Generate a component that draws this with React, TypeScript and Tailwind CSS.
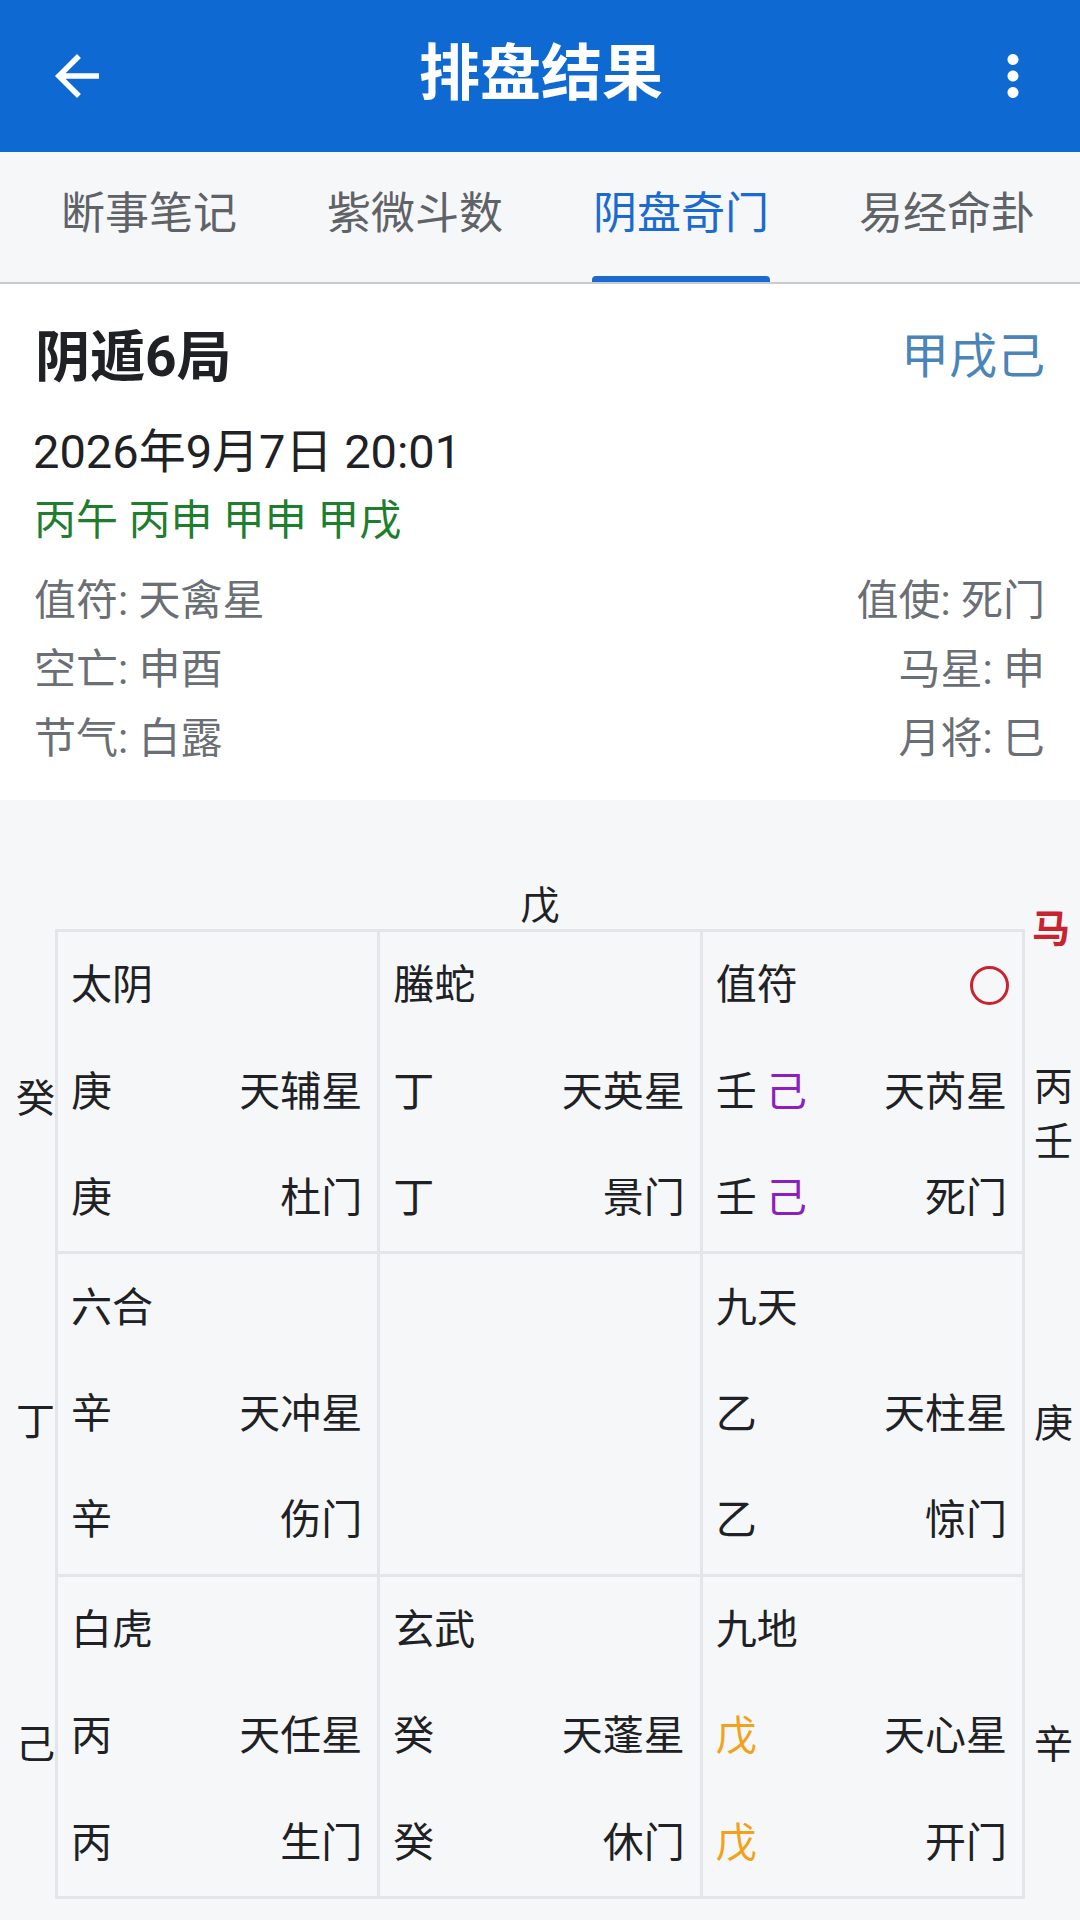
import React from "react";

const tabs = ["断事笔记", "紫微斗数", "阴盘奇门", "易经命卦"];

type Cell = {
  god?: string;
  circle?: boolean;
  rows?: { l: React.ReactNode; r: string }[];
};

const Purple = ({ c }: { c: string }) => <span className="text-[#8e1fbf] ml-[9px]">{c}</span>;
const Orange = ({ c }: { c: string }) => <span className="text-[#f2a21a]">{c}</span>;

const cells: Cell[] = [
  { god: "太阴", rows: [{ l: "庚", r: "天辅星" }, { l: "庚", r: "杜门" }] },
  { god: "螣蛇", rows: [{ l: "丁", r: "天英星" }, { l: "丁", r: "景门" }] },
  {
    god: "值符",
    circle: true,
    rows: [
      { l: <>壬<Purple c="己" /></>, r: "天芮星" },
      { l: <>壬<Purple c="己" /></>, r: "死门" },
    ],
  },
  { god: "六合", rows: [{ l: "辛", r: "天冲星" }, { l: "辛", r: "伤门" }] },
  {},
  { god: "九天", rows: [{ l: "乙", r: "天柱星" }, { l: "乙", r: "惊门" }] },
  { god: "白虎", rows: [{ l: "丙", r: "天任星" }, { l: "丙", r: "生门" }] },
  { god: "玄武", rows: [{ l: "癸", r: "天蓬星" }, { l: "癸", r: "休门" }] },
  { god: "九地", rows: [{ l: <Orange c="戊" />, r: "天心星" }, { l: <Orange c="戊" />, r: "开门" }] },
];

function GridCell({ cell }: { cell: Cell }) {
  if (!cell.god) return <div className="bg-[#f6f7f9]" />;
  return (
    <div className="bg-[#f6f7f9] flex flex-col pl-[13px] pr-[15px] text-[41px] leading-[50px] text-[#202124]">
      <div className="flex-1 flex items-center justify-between">
        <span>{cell.god}</span>
        {cell.circle && (
          <div className="w-[39px] h-[39px] rounded-full border-[3px] border-[#c8232f] mr-[-2px]" />
        )}
      </div>
      {cell.rows!.map((r, i) => (
        <div key={i} className="flex-1 flex items-center justify-between">
          <span>{r.l}</span>
          <span>{r.r}</span>
        </div>
      ))}
    </div>
  );
}

export default function App() {
  return (
    <div className="w-[1080px] h-[1920px] overflow-hidden bg-[#f6f7f9] font-[Roboto,'Noto_Sans_CJK_SC',sans-serif]">
      {/* App bar */}
      <div className="h-[152px] bg-[#0f69d3] flex items-center">
        <div className="flex-1 flex items-center pl-[44px]">
          <svg width="66" height="66" viewBox="0 0 24 24" fill="#ffffff">
            <path d="M20 11H7.83l5.59-5.59L12 4l-8 8 8 8 1.41-1.41L7.83 13H20v-2z" />
          </svg>
        </div>
        <div className="text-white text-[61px] font-bold leading-[70px] mb-[4px] mr-[8px]">排盘结果</div>
        <div className="flex-1 flex items-center justify-end pr-[34px]">
          <svg width="66" height="66" viewBox="0 0 24 24" fill="#ffffff">
            <path d="M12 8c1.1 0 2-.9 2-2s-.9-2-2-2-2 .9-2 2 .9 2 2 2zm0 2c-1.1 0-2 .9-2 2s.9 2 2 2 2-.9 2-2-.9-2-2-2zm0 6c-1.1 0-2 .9-2 2s.9 2 2 2 2-.9 2-2-.9-2-2-2z" />
          </svg>
        </div>
      </div>

      {/* Tabs */}
      <div className="bg-[#f6f7f9]">
        <div className="flex h-[130px] pl-[16px]">
          {tabs.map((t, i) => (
            <div key={t} className="w-[267px] flex flex-col items-center">
              <div
                className={`flex-1 flex items-center text-[44px] leading-[50px] ${
                  i === 2 ? "text-[#1a6ad2]" : "text-[#5f6368]"
                }`}
              >
                {t}
              </div>
              <div className={`h-[6px] w-[178px] rounded-t-[4px] ${i === 2 ? "bg-[#1a6ad2]" : ""}`} />
            </div>
          ))}
        </div>
        <div className="h-[2px] bg-[#c9cbcf]" />
      </div>

      {/* Info card */}
      <div className="bg-white pl-[35px] pr-[35px] pt-[43px] pb-[27px]">
        <div className="flex items-center justify-between h-[60px]">
          <div className="text-[55px] font-bold text-[#202124] leading-[60px]">阴遁6局</div>
          <div className="text-[48px] text-[#4a84b8] leading-[60px]">甲戌己</div>
        </div>
        <div className="mt-[38px] text-[47px] leading-[54px] text-[#202124] ml-[-2px]">2026年9月7日 20:01</div>
        <div className="mt-[17px] text-[42px] leading-[50px] text-[#1f7e2e] ml-[-1px]">丙午 丙申 甲申 甲戌</div>
        <div className="mt-[20px] text-[42px] text-[#6a6f75]">
          {[
            ["值符: 天禽星", "值使: 死门"],
            ["空亡: 申酉", "马星: 申"],
            ["节气: 白露", "月将: 巳"],
          ].map(([a, b]) => (
            <div key={a} className="h-[69px] flex items-center justify-between leading-[50px]">
              <span className="ml-[-1px]">{a}</span>
              <span>{b}</span>
            </div>
          ))}
        </div>
      </div>

      {/* Pan */}
      <div className="pt-[83px]">
        <div className="h-[46px] flex items-center justify-center text-[39px] leading-[46px] text-[#202124]">
          戊
        </div>
        <div className="flex text-[39px] text-[#202124]">
          <div className="w-[55px] flex flex-col">
            {["癸", "丁", "己"].map((c) => (
              <div key={c} className="flex-1 flex items-center justify-end pt-[16px] leading-[46px]">
                {c}
              </div>
            ))}
          </div>
          <div className="w-[970px] h-[970px] bg-[#e3e5e8] p-[3px] grid grid-cols-3 grid-rows-3 gap-[3px]">
            {cells.map((c, i) => (
              <GridCell key={i} cell={c} />
            ))}
          </div>
          <div className="flex-1 flex flex-col relative pl-[9px]">
            <div className="absolute left-[7px] top-[-19px] text-[38px] font-bold leading-[38px] text-[#c8232f]">马</div>
            <div className="flex-1 flex flex-col justify-center pt-[32px] leading-[55px]">
              <div>丙</div>
              <div>壬</div>
            </div>
            <div className="flex-1 flex items-center pt-[0px] leading-[46px]">庚</div>
            <div className="flex-1 flex items-center pt-[12px] leading-[46px]">辛</div>
          </div>
        </div>
      </div>
    </div>
  );
}
